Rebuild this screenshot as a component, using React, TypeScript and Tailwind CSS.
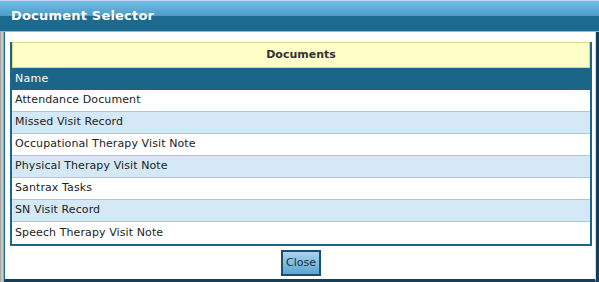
import React from 'react';

const docs = [
  'Attendance Document',
  'Missed Visit Record',
  'Occupational Therapy Visit Note',
  'Physical Therapy Visit Note',
  'Santrax Tasks',
  'SN Visit Record',
  'Speech Therapy Visit Note',
];

export default function App() {
  return (
    <div
      className="w-[599px] h-[282px] flex flex-col bg-white overflow-hidden"
      style={{ fontFamily: '"DejaVu Sans", Verdana, sans-serif' }}
    >
      {/* Title bar */}
      <div className="h-[32px] flex flex-col shrink-0 relative">
        <div className="h-[1px] bg-[#c4d2f0]" />
        <div className="h-[15px] bg-gradient-to-b from-[#72bfe6] to-[#4c9cc8]" />
        <div className="h-[15px] bg-[#1c6a8e]" />
        <div className="h-[1px] bg-[#86bde0]" />
        <span className="absolute left-[11px] top-[8px] text-[13px] font-bold text-white leading-[16px] tracking-[0.2px]">
          Document Selector
        </span>
      </div>

      {/* Body */}
      <div className="flex-1 flex min-h-0">
        <div className="w-[4px] bg-[#c8c8c8] border-l border-r border-[#a8a8a8]" />
        <div className="flex-1 flex flex-col border-l border-[#1c6a8e] border-b-[3px] border-b-[#123f5c] border-r border-r-[#d8d8d8] pl-[5px] pr-[3px] pt-[10px]">
          <div className="flex flex-col border-x-2 border-[#1b6688] border-b-2 border-b-[#1b6688]">
            <div className="h-[26px] bg-[#fffdc8] border border-[#d9d98a] flex items-center justify-center text-[11px] font-bold text-[#333]">
              Documents
            </div>
            <div className="h-[22px] bg-[#1b6688] text-white text-[11px] flex items-center pl-[3px] tracking-[0.3px]">
              Name
            </div>
            {docs.map((d, i) => (
              <div
                key={d}
                className={`h-[22px] flex items-center pl-[3px] text-[11px] text-[#222] tracking-[0.1px] border-b border-[#a6cce2] last:border-b-0 ${
                  i % 2 === 1 ? 'bg-[#d4e9f5]' : 'bg-white'
                }`}
              >
                {d}
              </div>
            ))}
          </div>
          <div className="flex justify-center pt-[4px]">
            <button className="w-[40px] h-[26px] border-2 border-[#1b4f70] bg-gradient-to-b from-[#a8d4ee] to-[#5aa6d0] text-[11px] text-[#1a2f3f]">
              Close
            </button>
          </div>
        </div>
        <div className="w-[3px] bg-[#123f5c]" />
      </div>
    </div>
  );
}
